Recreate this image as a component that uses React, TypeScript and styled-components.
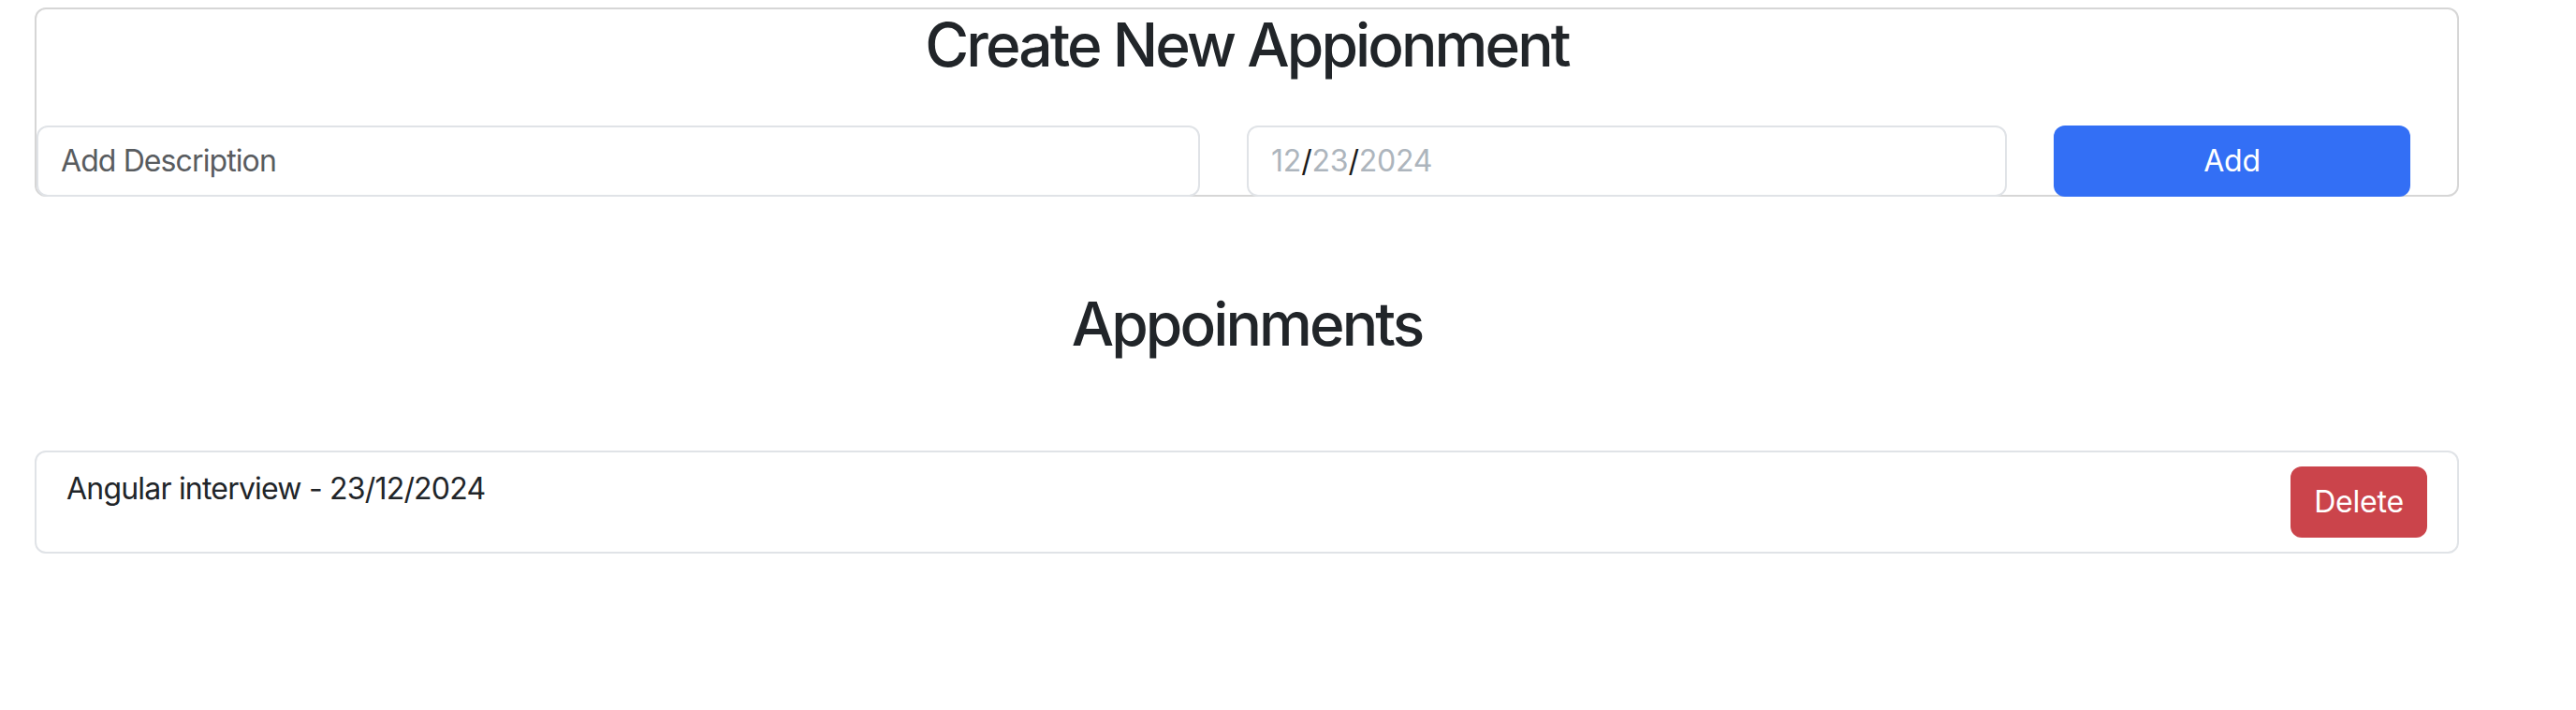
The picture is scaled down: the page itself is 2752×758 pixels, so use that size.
import React from "react";
import styled, { createGlobalStyle } from "styled-components";

const Global = createGlobalStyle`
  html, body { margin: 0; padding: 0; background: #ffffff; }
  body {
    font-family: Inter, "Noto Sans", "Liberation Sans", sans-serif;
    color: #212529;
    -webkit-font-smoothing: antialiased;
  }
  * { box-sizing: border-box; }
`;

const Page = styled.main`
  width: 2590px;
  margin-left: 37px;
  padding-top: 8px;
`;

const Card = styled.section`
  border: 2px solid #d6d6d6;
  border-radius: 12px;
  padding-top: 0;
`;

const Heading = styled.h2<{ $gap?: number }>`
  margin: 0;
  margin-top: ${(p) => p.$gap ?? 0}px;
  font-size: 64px;
  line-height: 76.8px;
  font-weight: 500;
  text-align: center;
  letter-spacing: -2.9px;
  color: #212529;
`;

const FormRow = styled.div`
  display: grid;
  grid-template-columns: 6fr 4fr 2fr;
  margin-top: 47px;
  margin-bottom: -2px;
`;

const Col = styled.div`
  padding-right: 50px;
`;

const TextInput = styled.input`
  display: block;
  width: 100%;
  height: 76px;
  padding: 12px 24px;
  font: inherit;
  font-size: 32px;
  letter-spacing: -0.9px;
  color: #212529;
  background: #fff;
  border: 2px solid #e0e3e7;
  border-radius: 12px;
  outline: none;
  &::placeholder { color: #595c5f; }
`;

const DateField = styled.div`
  display: flex;
  align-items: center;
  height: 76px;
  padding: 12px 24px;
  font-size: 32px;
  letter-spacing: -0.2px;
  background: #fff;
  border: 2px solid #e0e3e7;
  border-radius: 12px;
`;

const DatePart = styled.span`
  color: #adb5bd;
`;

const DateSep = styled.span`
  color: #1a1a1a;
`;

const Button = styled.button<{ $variant: "primary" | "danger"; $block?: boolean }>`
  display: inline-flex;
  align-items: center;
  justify-content: center;
  width: ${(p) => (p.$block ? "100%" : "auto")};
  height: 76px;
  padding: 12px 25px;
  font: inherit;
  font-size: 32px;
  letter-spacing: -0.2px;
  color: #fff;
  border: none;
  border-radius: 12px;
  background: ${(p) => (p.$variant === "primary" ? "#336ff5" : "#cb444b")};
  cursor: pointer;
`;

const List = styled.ul`
  list-style: none;
  margin: 96px 0 0;
  padding: 0;
`;

const Item = styled.li`
  display: flex;
  justify-content: space-between;
  align-items: flex-start;
  padding: 15px 32px;
  border: 2px solid #e0e3e7;
  border-radius: 12px;
`;

const ItemText = styled.span`
  font-size: 32px;
  line-height: 48px;
  letter-spacing: -0.8px;
  color: #212529;
`;

export default function App() {
  return (
    <>
      <Global />
      <Page>
        <Card>
          <Heading>Create New Appionment</Heading>
          <FormRow>
            <Col>
              <TextInput placeholder="Add Description" />
            </Col>
            <Col>
              <DateField>
                <DatePart>12</DatePart>
                <DateSep>/</DateSep>
                <DatePart>23</DatePart>
                <DateSep>/</DateSep>
                <DatePart>2024</DatePart>
              </DateField>
            </Col>
            <Col>
              <Button $variant="primary" $block>Add</Button>
            </Col>
          </FormRow>
        </Card>
        <Heading $gap={98}>Appoinments</Heading>
        <List>
          <Item>
            <ItemText>Angular interview - 23/12/2024</ItemText>
            <Button $variant="danger">Delete</Button>
          </Item>
        </List>
      </Page>
    </>
  );
}
